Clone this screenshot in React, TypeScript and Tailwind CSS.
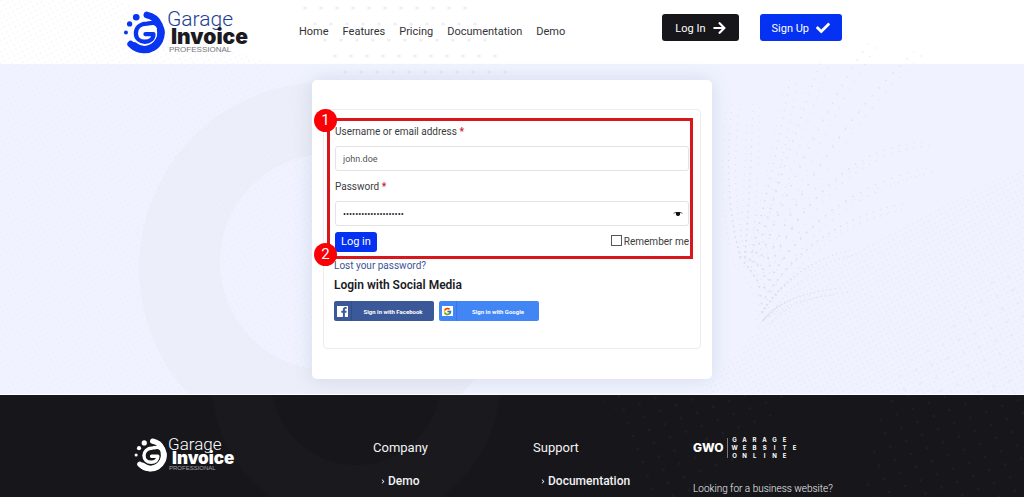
import React from "react";
import { FaArrowRight, FaCheck, FaChevronRight, FaFacebookF } from "react-icons/fa";
import { FcGoogle } from "react-icons/fc";

const navLinks = ["Home", "Features", "Pricing", "Documentation", "Demo"];

// start point and bend of every dotted ray in the background
const rays = [
    { x: 732, y: 105, cx: 722, cy: 200 },
    { x: 753, y: 104, cx: 750, cy: 200 },
    { x: 790, y: 80, cx: 772, cy: 180 },
    { x: 820, y: 64, cx: 785, cy: 160 },
    { x: 868, y: 44, cx: 800, cy: 150 },
    { x: 914, y: 52, cx: 820, cy: 140 },
    { x: 922, y: 142, cx: 820, cy: 150 },
    { x: 926, y: 168, cx: 810, cy: 195 },
    { x: 902, y: 204, cx: 805, cy: 225 },
    { x: 850, y: 250, cx: 790, cy: 265 },
    { x: 840, y: 288, cx: 780, cy: 295 },
];

function LogoMark({ className }: { className: string }): JSX.Element {
    return (
        <svg viewBox="10 12 128 130" className={className} fill="none" stroke="currentColor" strokeLinecap="round" aria-hidden="true">
            <path d="M84 24 A53 53 0 1 1 35 112" strokeWidth="20" />
            <path d="M126 70 A50 50 0 0 1 46 118" strokeWidth="23" />
            <path d="M122 64 C114 42 98 48 84 50 C62 51 51 64 51 79 C51 95 63 105 78 105 C94 105 104 96 104 82 H80" strokeWidth="13" strokeLinejoin="round" />
            <circle cx="52" cy="31" r="10" fill="currentColor" stroke="none" />
            <circle cx="32" cy="51" r="8" fill="currentColor" stroke="none" />
            <circle cx="21" cy="77" r="6" fill="currentColor" stroke="none" />
        </svg>
    );
}

function HeaderLogo(): JSX.Element {
    return (
        <a href="#home" className="flex items-center gap-[2px]">
            <LogoMark className="h-[43px] w-[43px] text-[#0a35f0]" />
            <span className="flex flex-col">
                <span className="text-[21px] font-light leading-[19px] text-[#1d3f94]">Garage</span>
                <span className="pl-1 font-['Inter'] text-[21px] font-black leading-[16px] text-[#1b1b1f]">Invoice</span>
                <span className="pl-[2px] font-['Liberation_Sans'] text-[8px] leading-[9px] text-[#77777c]">PROFESSIONAL</span>
            </span>
        </a>
    );
}

function FooterLogo(): JSX.Element {
    return (
        <a href="#home" className="flex items-center gap-px text-white">
            <LogoMark className="h-[34px] w-[34px]" />
            <span className="flex flex-col">
                <span className="text-[17px] font-light leading-[15px]">Garage</span>
                <span className="pl-1 font-['Inter'] text-[17px] font-black leading-[13px]">Invoice</span>
                <span className="pl-px font-['Liberation_Sans'] text-[6px] leading-[7px] text-[#a0a0a5]">PROFESSIONAL</span>
            </span>
        </a>
    );
}

function GwoLogo(): JSX.Element {
    return (
        <a href="#gwo" className="flex h-[22px] items-center font-['Inter'] text-white">
            <span className="text-[12px] font-extrabold">GWO</span>
            <span className="ml-[3px] h-5 border-l border-[#77777c]" />
            <span className="ml-[2px] text-[6px] font-bold leading-[8px]">
                {["GARAGE", "WEBSITE", "ONLINE"].map((word) => (
                    <span key={word} className="grid grid-cols-[repeat(7,10px)]">
                        {word.split("").map((letter, i) => <span key={i} className="text-center">{letter}</span>)}
                    </span>
                ))}
            </span>
        </a>
    );
}

function BackgroundDots(): JSX.Element {
    const dots = [];
    for (let row = 0; row < 5; row++) {
        for (let col = 0; col < 11; col++) {
            dots.push(<ellipse key={`h${row}-${col}`} cx={305 + row * 10 + col * 16} cy={8 + row * 16} rx="2" ry="1.5" opacity="0.4" />);
        }
    }
    rays.forEach((ray, r) => {
        for (let i = 0; i < 26; i++) {
            const t = i / 26;
            const x = (1 - t) * (1 - t) * ray.x + 2 * t * (1 - t) * ray.cx + t * t * (742 + r * 2);
            const y = (1 - t) * (1 - t) * ray.y + 2 * t * (1 - t) * ray.cy + t * t * (262 + r * 6);
            dots.push(<circle key={`r${r}-${i}`} cx={x} cy={y} r={0.6 + t * 0.5} opacity="0.8" />);
            dots.push(<circle key={`s${r}-${i}`} cx={x + 7} cy={y + 4} r={0.7} opacity="0.6" />);
            dots.push(<circle key={`u${r}-${i}`} cx={x - 6} cy={y + 7} r={0.6} opacity="0.5" />);
        }
    });
    return <g fill="#d6dae8">{dots}</g>;
}

function Background(): JSX.Element {
    return (
        <svg className="pointer-events-none absolute left-0 top-0 h-[394px] w-[1024px]" viewBox="0 0 1024 394" aria-hidden="true">
            <defs>
                <pattern id="fine" width="5" height="5" patternUnits="userSpaceOnUse" patternTransform="rotate(-28)">
                    <circle cx="1" cy="1" r="0.8" fill="#e4e7f3" />
                </pattern>
                <pattern id="coarse" width="17" height="14" patternUnits="userSpaceOnUse" patternTransform="rotate(-20)">
                    <circle cx="3" cy="3" r="1.6" fill="#dfe3f0" />
                </pattern>
                <clipPath id="mainArea"><rect y="64" width="1024" height="330" /></clipPath>
            </defs>
            <g clipPath="url(#mainArea)">
                <circle cx="325" cy="268" r="186" fill="#ecEff9" />
                <circle cx="328" cy="262" r="108" fill="#f0f3ff" />
            </g>
            <path d="M0 0 H120 L330 90 V394 H0 Z" fill="url(#fine)" opacity="0.6" />
            <path d="M700 394 L800 280 L1024 165 V394 Z" fill="url(#fine)" />
            <path d="M880 394 L990 280 L1024 270 V394 Z" fill="url(#coarse)" opacity="0.5" />
            <BackgroundDots />
        </svg>
    );
}

function StepBadge({ text, className }: { text: string; className: string }): JSX.Element {
    return (
        <span className={`absolute -left-4 flex h-[23px] w-[23px] items-center justify-center rounded-full bg-[#fa0006] text-[15px] text-white ${className}`}>
            {text}
        </span>
    );
}

function LoginForm(): JSX.Element {
    return (
        <form className="relative px-px" onSubmit={(e) => e.preventDefault()}>
            <label htmlFor="username" className="block text-[10px] leading-4 text-[#3c3c40]">
                Username or email address <span className="font-bold text-[#c8232c]">*</span>
            </label>
            <input
                id="username"
                type="text"
                defaultValue="john.doe"
                className="mt-[6px] block h-[25px] w-full rounded-[3px] border border-[#e3e3e6] bg-white px-[7px] text-[9px] text-[#55555a]"
            />
            <label htmlFor="password" className="mt-2 block text-[10px] leading-4 text-[#3c3c40]">
                Password <span className="font-bold text-[#c8232c]">*</span>
            </label>
            <div className="relative mt-[6px]">
                <input
                    id="password"
                    type="password"
                    defaultValue="a-long-password-1234"
                    className="block h-[25px] w-full rounded-[3px] border border-[#e3e3e6] bg-white px-[7px] text-[9px] text-[#222226]"
                />
                <button type="button" aria-label="Show password" className="absolute inset-y-0 right-[6px] flex items-center">
                    <svg viewBox="0 0 20 12" className="h-[6px] w-[10px]" aria-hidden="true">
                        <path d="M0 5 C4 1 16 1 20 5 L14 4 C15 8 13 10 10 10 C7 10 5 8 6 4 Z" fill="#111" />
                    </svg>
                </button>
            </div>
            <div className="mt-[6px] flex items-start justify-between">
                <button type="submit" className="h-5 rounded-[3px] bg-[#0531f2] px-[6px] text-[11px] text-white">Log in</button>
                <label className="mt-[2px] flex items-center gap-[2px] text-[10px] leading-4 text-[#3c3c40]">
                    <input type="checkbox" className="mb-1 h-[11px] w-[11px] appearance-none border border-[#55555a] bg-white" />
                    Remember me
                </label>
            </div>
            <div className="pointer-events-none absolute -bottom-[7px] -left-[7px] -right-[3px] -top-[6px] border-[3px] border-[#d8161b]">
                <StepBadge text="1" className="-top-3" />
                <StepBadge text="2" className="-bottom-[10px]" />
            </div>
        </form>
    );
}

function Footer(): JSX.Element {
    return (
        <footer className="relative h-[103px] overflow-hidden bg-[#17171b]">
            <svg className="pointer-events-none absolute left-0 top-0 h-[103px] w-[1024px]" viewBox="0 0 1024 103" aria-hidden="true">
                <defs>
                    <pattern id="footerDots" width="17" height="14" patternUnits="userSpaceOnUse" patternTransform="rotate(-20)">
                        <circle cx="3" cy="3" r="1.2" fill="#1e1e23" />
                    </pattern>
                </defs>
                <circle cx="356" cy="-15" r="115" fill="none" stroke="#1a1a1e" strokeWidth="60" />
                <path d="M640 103 L600 0 H790 L700 103 Z M860 103 L880 0 H1024 V103 Z" fill="url(#footerDots)" />
            </svg>
            <div className="relative mx-auto grid max-w-[800px] grid-cols-[240px_160px_160px_1fr] items-start pl-[21px] pt-[42px] text-[#f2f2f4]">
                <FooterLogo />
                <div>
                    <h3 className="text-[13px] leading-[22px]">Company</h3>
                    <a href="#demo" className="ml-2 mt-[14px] flex items-center gap-[3px] text-[12px] font-medium leading-4">
                        <FaChevronRight className="h-[5px] w-[4px]" /> Demo
                    </a>
                </div>
                <div>
                    <h3 className="text-[13px] leading-[22px]">Support</h3>
                    <a href="#documentation" className="ml-2 mt-[14px] flex items-center gap-[3px] text-[12px] font-medium leading-4">
                        <FaChevronRight className="h-[5px] w-[4px]" /> Documentation
                    </a>
                </div>
                <div>
                    <GwoLogo />
                    <p className="mt-[22px] text-[10px] font-light leading-4">Looking for a business website?</p>
                </div>
            </div>
        </footer>
    );
}

function App(): JSX.Element {
    return (
        <div className="relative overflow-hidden bg-white font-['Roboto',sans-serif]">
            <div className="absolute inset-x-0 top-16 h-[330px] bg-[#f0f3ff]" />
            <Background />

            <header className="relative mx-auto flex h-16 max-w-[800px] justify-between pl-[10px] pr-[70px]">
                <div className="flex">
                    <div className="w-[177px] pt-[10px]"><HeaderLogo /></div>
                    <nav className="flex gap-[14px] pt-6 text-[11px] leading-4 text-[#333337]">
                        {navLinks.map((link) => <a key={link} href={`#${link.toLowerCase()}`}>{link}</a>)}
                    </nav>
                </div>
                <div className="flex gap-[21px] pt-[14px] text-[11px] text-white">
                    <a href="#login" className="flex h-[27px] items-center gap-[7px] rounded-[3px] bg-[#17171b] px-[13px]">
                        <span className="pt-[2px] leading-4">Log In</span> <FaArrowRight className="h-[14px] w-[13px]" />
                    </a>
                    <a href="#signup" className="flex h-[27px] items-center gap-[7px] rounded-[3px] bg-[#0531f2] px-[12px]">
                        <span className="pt-[2px] leading-4">Sign Up</span> <FaCheck className="h-[14px] w-[14px]" />
                    </a>
                </div>
            </header>

            <main className="relative py-4">
                <section className="mx-auto h-[299px] w-full max-w-[400px] rounded-[5px] bg-white px-[11px] pt-[29px] shadow-[0_0_20px_rgba(60,70,110,0.14)]">
                    <div className="h-[240px] rounded-[4px] border border-[#ececef] px-[10px] pt-[14px]">
                        <LoginForm />
                        <a href="#lost-password" className="mt-[6px] block text-[10px] leading-4 text-[#3c5596]">Lost your password?</a>
                        <h2 className="mt-[3px] text-[12px] font-semibold leading-4 text-[#1b1b1f]">Login with Social Media</h2>
                        <div className="mt-2 flex gap-[5px] text-[6px] font-bold text-white">
                            <button type="button" className="flex h-5 w-[100px] items-center rounded-[2px] bg-[#3b5998]">
                                <span className="flex h-full w-[18px] items-center justify-center border-r border-[#334e87]">
                                    <span className="flex h-[11px] w-[11px] items-end justify-end bg-white"><FaFacebookF className="h-[10px] w-[8px] text-[#3b5998]" /></span>
                                </span>
                                <span className="flex-1">Sign in with Facebook</span>
                            </button>
                            <button type="button" className="flex h-5 w-[100px] items-center rounded-[2px] bg-[#4285f4]">
                                <span className="flex h-full w-[18px] items-center justify-center border-r border-[#3a78df]">
                                    <span className="flex h-[10px] w-[11px] items-center justify-center bg-white"><FcGoogle className="h-[9px] w-[9px]" /></span>
                                </span>
                                <span className="flex-1">Sign in with Google</span>
                            </button>
                        </div>
                    </div>
                </section>
            </main>

            <Footer />
        </div>
    );
}

export default App;
